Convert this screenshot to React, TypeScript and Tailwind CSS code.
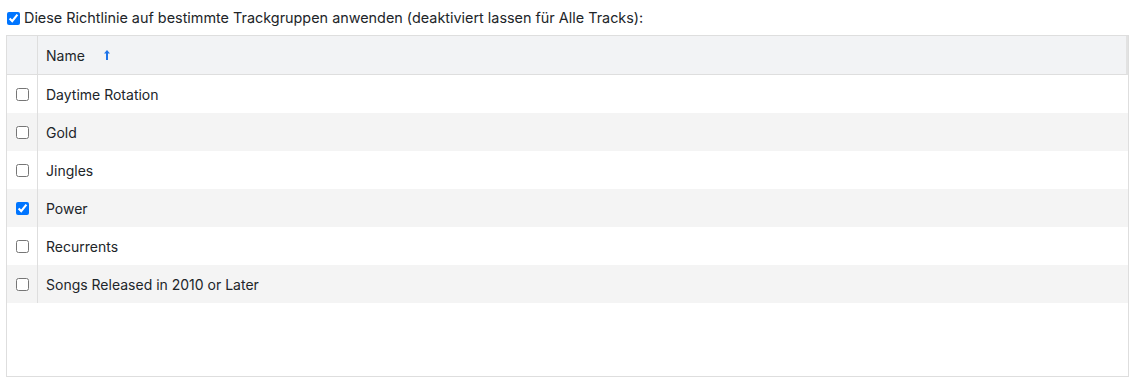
import { useState } from 'react';

export default function App() {
  const [groups, setGroups] = useState([
    { name: 'Daytime Rotation', checked: false },
    { name: 'Gold', checked: false },
    { name: 'Jingles', checked: false },
    { name: 'Power', checked: true },
    { name: 'Recurrents', checked: false },
    { name: 'Songs Released in 2010 or Later', checked: false },
  ]);
  const [enabled, setEnabled] = useState(true);

  const toggle = (i: number) =>
    setGroups(groups.map((g, j) => (j === i ? { ...g, checked: !g.checked } : g)));

  return (
    <div className="w-[1133px] h-[382px] bg-white text-[#212529] text-[14px] font-['Inter',sans-serif] px-[6px] pt-[8px]">
      <label className="flex items-center h-[20px] gap-[4px] pl-[1px] text-[14.4px]">
        <input
          type="checkbox"
          checked={enabled}
          onChange={() => setEnabled(!enabled)}
          className="m-0 w-[13px] h-[13px]"
        />
        <span>Diese Richtlinie auf bestimmte Trackgruppen anwenden (deaktiviert lassen für Alle Tracks):</span>
      </label>

      <div className="mt-[7px] w-[1123px] h-[342px] border border-[#dedede] bg-white">
        {/* Header */}
        <div className="flex h-[39px] bg-[#f2f3f5] border-b border-[#dedede] border-r-2 border-r-[#e2e2e2]">
          <div className="w-[31px] border-r border-[#dedede]" />
          <div className="flex items-center pl-[8px] gap-[18px]">
            <span>Name</span>
            <svg width="8" height="11" viewBox="0 0 8 11" className="mb-[2px]">
              <path d="M4 1 L7 4.5 H5 V11 H3 V4.5 H1 Z" fill="#1e73e8" />
            </svg>
          </div>
        </div>

        {/* Rows */}
        {groups.map((g, i) => (
          <div
            key={g.name}
            className={`flex h-[38px] ${i % 2 === 1 ? 'bg-[#f4f4f4]' : 'bg-white'}`}
          >
            <div className="w-[31px] flex items-center justify-center border-r border-[#dedede]">
              <input
                type="checkbox"
                checked={g.checked}
                onChange={() => toggle(i)}
                className="m-0 w-[13px] h-[13px]"
              />
            </div>
            <div className="flex items-center pl-[8px]">{g.name}</div>
          </div>
        ))}
      </div>
    </div>
  );
}
